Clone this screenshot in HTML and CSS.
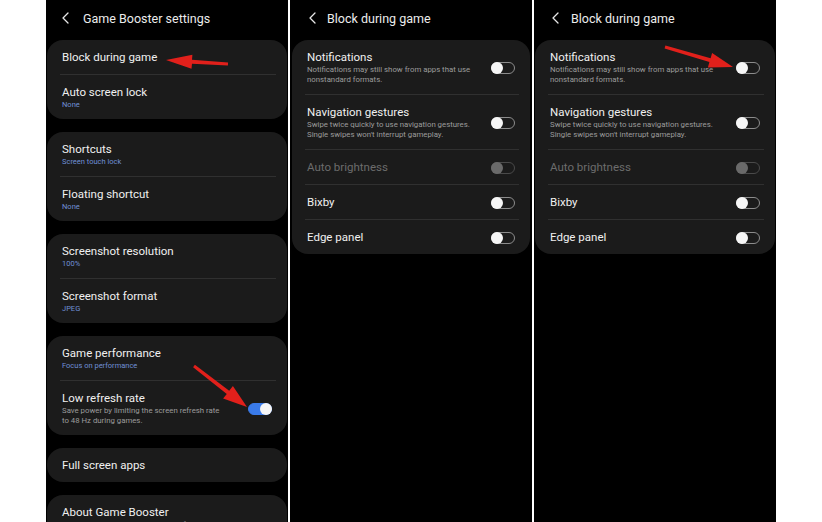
FILE: index.html
```html
<!DOCTYPE html>
<html lang="en">
<head>
<meta charset="utf-8">
<title>Game Booster settings</title>
<link rel="stylesheet" href="styles.css">
</head>
<body>
<div class="stage">
  <section class="phone first">
    <header class="bar">
      <svg class="back" width="7" height="12" viewBox="0 0 7 12"><path d="M6 1 L1 6 L6 11" fill="none" stroke="#e8e8e8" stroke-width="1.3" stroke-linecap="round" stroke-linejoin="round"/></svg>
      <h1 class="bar-title">Game Booster settings</h1>
    </header>
    <div class="cards">
      <div class="card">
        <div class="row"><div class="txt"><div class="t">Block during game</div></div></div>
        <div class="div"></div>
        <div class="row"><div class="txt"><div class="t">Auto screen lock</div><div class="s">None</div></div></div>
      </div>
      <div class="card">
        <div class="row"><div class="txt"><div class="t">Shortcuts</div><div class="s">Screen touch lock</div></div></div>
        <div class="div"></div>
        <div class="row"><div class="txt"><div class="t">Floating shortcut</div><div class="s">None</div></div></div>
      </div>
      <div class="card">
        <div class="row"><div class="txt"><div class="t">Screenshot resolution</div><div class="s">100%</div></div></div>
        <div class="div"></div>
        <div class="row"><div class="txt"><div class="t">Screenshot format</div><div class="s">JPEG</div></div></div>
      </div>
      <div class="card">
        <div class="row"><div class="txt"><div class="t">Game performance</div><div class="s">Focus on performance</div></div></div>
        <div class="div"></div>
        <div class="row"><div class="txt"><div class="t">Low refresh rate</div><div class="d">Save power by limiting the screen refresh rate<br>to 48 Hz during games.</div></div><span class="tog on"></span></div>
      </div>
      <div class="card">
        <div class="row"><div class="txt"><div class="t">Full screen apps</div></div></div>
      </div>
      <div class="card">
        <div class="row"><div class="txt"><div class="t">About Game Booster</div><div class="d">See the current version and legal information.</div></div></div>
      </div>
    </div>
    <svg class="arrows" viewBox="0 0 242 522" width="242" height="522">
      <polygon fill="#e1201b" points="120,60 146.4,54.7 146,59.7 182.1,62.5 181.9,65.5 146,63.7 145.5,68.7"/>
      <polygon fill="#e1201b" points="201,407 186.9,386 183.2,390.7 148.9,364.8 147.1,367.2 180.8,393.9 177.1,398.6"/>
    </svg>
  </section>

  <section class="phone mid">
    <header class="bar">
      <svg class="back" width="7" height="12" viewBox="0 0 7 12"><path d="M6 1 L1 6 L6 11" fill="none" stroke="#e8e8e8" stroke-width="1.3" stroke-linecap="round" stroke-linejoin="round"/></svg>
      <h1 class="bar-title">Block during game</h1>
    </header>
    <div class="cards">
      <div class="card">
        <div class="row"><div class="txt"><div class="t">Notifications</div><div class="d">Notifications may still show from apps that use<br>nonstandard formats.</div></div><span class="tog"></span></div>
        <div class="div"></div>
        <div class="row"><div class="txt"><div class="t">Navigation gestures</div><div class="d">Swipe twice quickly to use navigation gestures.<br>Single swipes won't interrupt gameplay.</div></div><span class="tog"></span></div>
        <div class="div"></div>
        <div class="row"><div class="txt"><div class="t dim">Auto brightness</div></div><span class="tog off-dis"></span></div>
        <div class="div"></div>
        <div class="row"><div class="txt"><div class="t">Bixby</div></div><span class="tog"></span></div>
        <div class="div"></div>
        <div class="row"><div class="txt"><div class="t">Edge panel</div></div><span class="tog"></span></div>
      </div>
    </div>
  </section>

  <section class="phone last">
    <header class="bar">
      <svg class="back" width="7" height="12" viewBox="0 0 7 12"><path d="M6 1 L1 6 L6 11" fill="none" stroke="#e8e8e8" stroke-width="1.3" stroke-linecap="round" stroke-linejoin="round"/></svg>
      <h1 class="bar-title">Block during game</h1>
    </header>
    <div class="cards">
      <div class="card">
        <div class="row"><div class="txt"><div class="t">Notifications</div><div class="d">Notifications may still show from apps that use<br>nonstandard formats.</div></div><span class="tog"></span></div>
        <div class="div"></div>
        <div class="row"><div class="txt"><div class="t">Navigation gestures</div><div class="d">Swipe twice quickly to use navigation gestures.<br>Single swipes won't interrupt gameplay.</div></div><span class="tog"></span></div>
        <div class="div"></div>
        <div class="row"><div class="txt"><div class="t dim">Auto brightness</div></div><span class="tog off-dis"></span></div>
        <div class="div"></div>
        <div class="row"><div class="txt"><div class="t">Bixby</div></div><span class="tog"></span></div>
        <div class="div"></div>
        <div class="row"><div class="txt"><div class="t">Edge panel</div></div><span class="tog"></span></div>
      </div>
    </div>
    <svg class="arrows" viewBox="0 0 242 522" width="242" height="522">
      <polygon fill="#e1201b" points="199,67 178.1,53 176.6,58.3 131.4,45.6 130.6,48.4 175.4,62.1 173.9,67.4"/>
    </svg>
  </section>
</div>
</body>
</html>
```

FILE: styles.css
```css
* { box-sizing: border-box; }
html, body { margin: 0; padding: 0; background: #ffffff; }
body { font-family: Roboto, "Liberation Sans", sans-serif; }

.stage {
  display: flex;
  gap: 2px;
  padding-left: 46px;
  height: 522px;
  width: 822px;
  background: #ffffff;
}

.phone {
  position: relative;
  flex: none;
  width: 242px;
  height: 522px;
  background: #000;
  overflow: hidden;
  padding: 0 1px;
}
.phone.mid { padding: 0 2px; }

.bar {
  height: 40px;
  display: flex;
  align-items: center;
  padding: 0 0 4px 15px;
  gap: 14px;
}
.phone.mid .bar { padding-left: 17px; gap: 11px; }
.phone.last .bar { padding-left: 17px; gap: 12px; }
.back { display: block; flex: none; }
.bar-title {
  margin: 0;
  font-size: 12.5px;
  font-weight: 400;
  color: #ececec;
}

.cards { display: flex; flex-direction: column; gap: 13px; }
.card {
  background: #1b1b1b;
  border-radius: 16px;
}
.row {
  display: flex;
  align-items: center;
  padding: 10px 15px 9px 15px;
}
.txt { flex: 1; min-width: 0; }
.t {
  font-size: 11.5px;
  line-height: 15px;
  color: #f0f0f0;
  white-space: nowrap;
}
.t.dim { color: #6c6c6c; }
.s {
  font-size: 7.5px;
  line-height: 10px;
  color: #6f8fd6;
  white-space: nowrap;
}
.d {
  font-size: 7.8px;
  line-height: 10px;
  color: #9b9b9b;
  white-space: nowrap;
}
.div {
  height: 1px;
  background: #303030;
  margin: 0 11px 0 13px;
}

.tog {
  position: relative;
  flex: none;
  width: 24px;
  height: 12px;
  border-radius: 6px;
  border: 1px solid #8c8c8c;
  background: #1b1b1b;
}
.tog::after {
  content: "";
  position: absolute;
  left: -1px;
  top: -1px;
  width: 12px;
  height: 12px;
  border-radius: 50%;
  background: #f6f6f6;
}
.tog.on { background: #3a7bea; border-color: #3a7bea; }
.tog.on::after { left: auto; right: -1px; }
.tog.off-dis { border-color: #4a4a4a; }
.tog.off-dis::after { background: #6a6a6a; }

.arrows {
  position: absolute;
  left: 0;
  top: 0;
  pointer-events: none;
}
```
